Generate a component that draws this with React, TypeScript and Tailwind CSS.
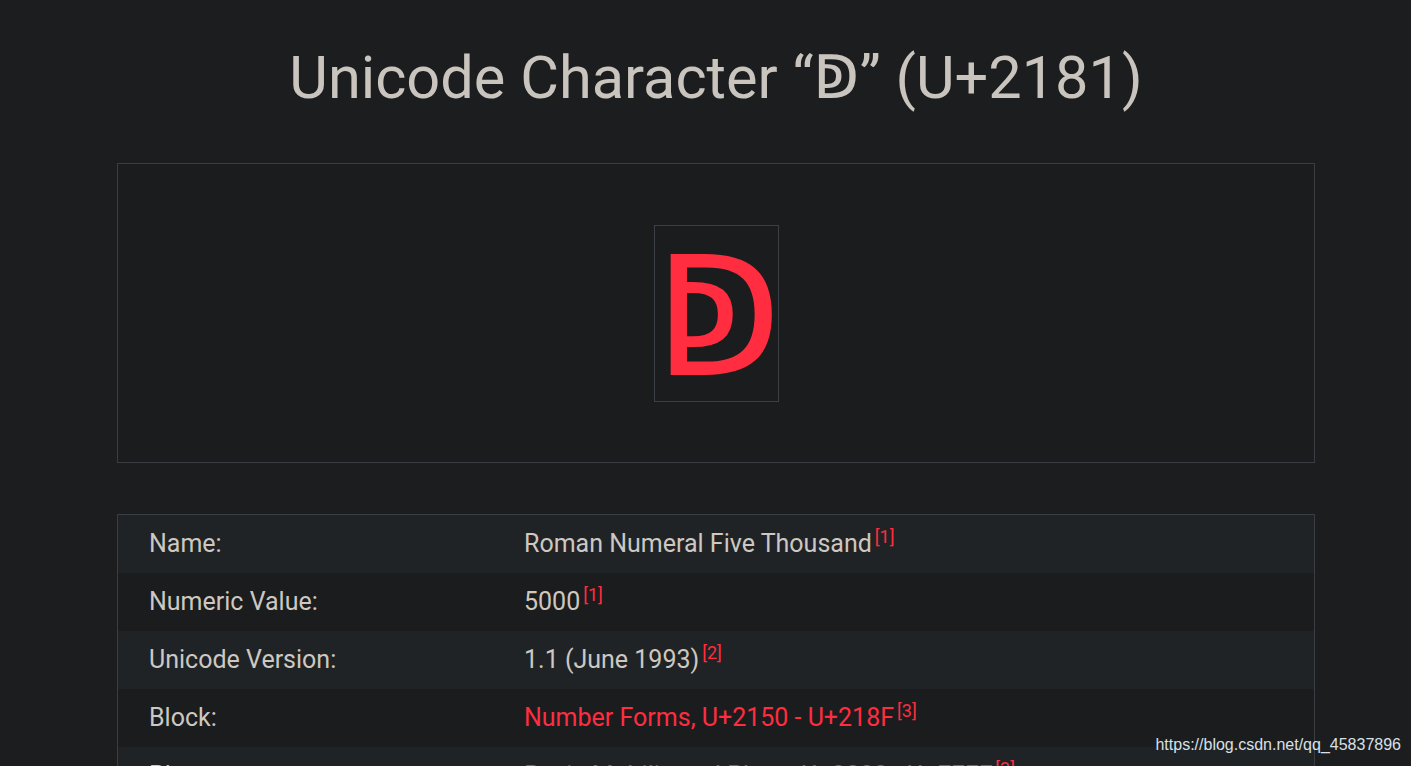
const rows: { label: string; value: string; note: string; link?: boolean }[] = [
  { label: 'Name:', value: 'Roman Numeral Five Thousand', note: '[1]' },
  { label: 'Numeric Value:', value: '5000', note: '[1]' },
  { label: 'Unicode Version:', value: '1.1 (June 1993)', note: '[2]' },
  { label: 'Block:', value: 'Number Forms, U+2150 - U+218F', note: '[3]', link: true },
  { label: 'Plane:', value: 'Basic Multilingual Plane, U+0000 - U+FFFF', note: '[3]', link: true },
];

export default function App() {
  return (
    <div className="relative h-[766px] overflow-hidden bg-[#1c1d1f] font-['Roboto',sans-serif] text-[#cdc8c1]">
      <div className="ml-[117px] w-[1198px]">
        <h1 className="pt-[38px] text-center text-[59.5px] leading-[80px] font-normal text-[#c9c4bd]">
          Unicode Character “ↁ” (U+2181)
        </h1>

        <div className="mt-[45px] flex h-[300px] items-center justify-center border border-[#3a3d41] bg-[#1b1c1e]">
          <div className="flex h-[177px] w-[125px] items-center justify-center border border-[#3b4047]">
            <span className="mt-[10px] ml-[4px] font-['DejaVu_Sans',sans-serif] text-[165px] leading-none text-[#ff2d3f]">ↁ</span>
          </div>
        </div>

        <div className="mt-[51px] border border-[#3a3d41]">
          {rows.map((r, i) => (
            <div
              key={r.label}
              className={`flex h-[58px] items-center text-[25px] ${i % 2 === 0 ? 'bg-[#202325]' : 'bg-[#1b1c1e]'}`}
            >
              <div className="w-[406px] pl-[31px]">{r.label}</div>
              <div className={`whitespace-nowrap ${r.link ? 'text-[#ff2d3f]' : ''}`}>
                {r.value}
                <sup className="ml-[3px] text-[18px] text-[#ff2d3f]">{r.note}</sup>
              </div>
            </div>
          ))}
        </div>
      </div>

      <div className="absolute right-[10px] bottom-[9px] font-['Liberation_Sans',sans-serif] text-[16px] text-[#d8e0e6]">
        https://blog.csdn.net/qq_45837896
      </div>
    </div>
  );
}
